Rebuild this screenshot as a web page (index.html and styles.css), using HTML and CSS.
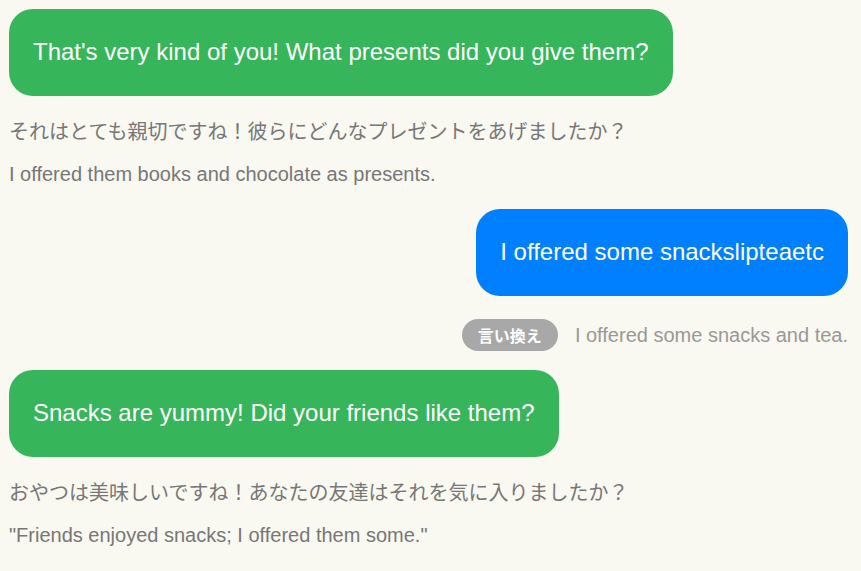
FILE: index.html
```html
<!DOCTYPE html>
<html lang="ja">
<head>
<meta charset="utf-8">
<title>Chat</title>
<link rel="stylesheet" href="styles.css">
</head>
<body>
<div class="chat">
  <div class="msg bot">
    <div class="bubble green">That's very kind of you! What presents did you give them?</div>
    <p class="jp">それはとても親切ですね！彼らにどんなプレゼントをあげましたか？</p>
    <p class="en">I offered them books and chocolate as presents.</p>
  </div>
  <div class="msg user">
    <div class="bubble blue">I offered some snackslipteaetc</div>
    <div class="rephrase">
      <span class="badge">言い換え</span>
      <span class="rephrase-text">I offered some snacks and tea.</span>
    </div>
  </div>
  <div class="msg bot second">
    <div class="bubble green">Snacks are yummy! Did your friends like them?</div>
    <p class="jp">おやつは美味しいですね！あなたの友達はそれを気に入りましたか？</p>
    <p class="en">"Friends enjoyed snacks; I offered them some."</p>
  </div>
</div>
</body>
</html>
```
FILE: styles.css
```css
html, body {
  margin: 0;
  padding: 0;
  background: #f9f8f1;
}
body {
  font-family: "Liberation Sans", Arial, "Noto Sans CJK JP", sans-serif;
}
.chat {
  padding: 9px 13px 0 9px;
  display: flex;
  flex-direction: column;
}
.msg {
  display: flex;
  flex-direction: column;
}
.msg.bot {
  align-items: flex-start;
}
.msg.user {
  align-items: flex-end;
  margin-top: 22px;
}
.msg.second {
  margin-top: 19px;
}
.bubble {
  padding: 29px 24px 30px;
  font-size: 24px;
  line-height: 28px;
  color: #ffffff;
  border-radius: 24px;
}
.green {
  background: #37b55a;
}
.blue {
  background: #007fff;
}
.jp, .en {
  margin: 0;
  font-size: 20px;
  line-height: 26px;
  color: #777777;
}
.jp {
  margin-top: 23px;
  font-family: "Liberation Sans", "Noto Sans CJK JP", sans-serif;
}
.en {
  margin-top: 16px;
}
.rephrase {
  margin-top: 23px;
  display: flex;
  align-items: center;
  gap: 17px;
}
.badge {
  height: 32px;
  padding: 0 16px;
  border-radius: 16px;
  background: #a8a8a8;
  color: #ffffff;
  font-family: "Noto Sans CJK JP", sans-serif;
  font-size: 16px;
  font-weight: 600;
  display: flex;
  align-items: center;
}
.rephrase-text {
  font-size: 20px;
  color: #999999;
}
```
